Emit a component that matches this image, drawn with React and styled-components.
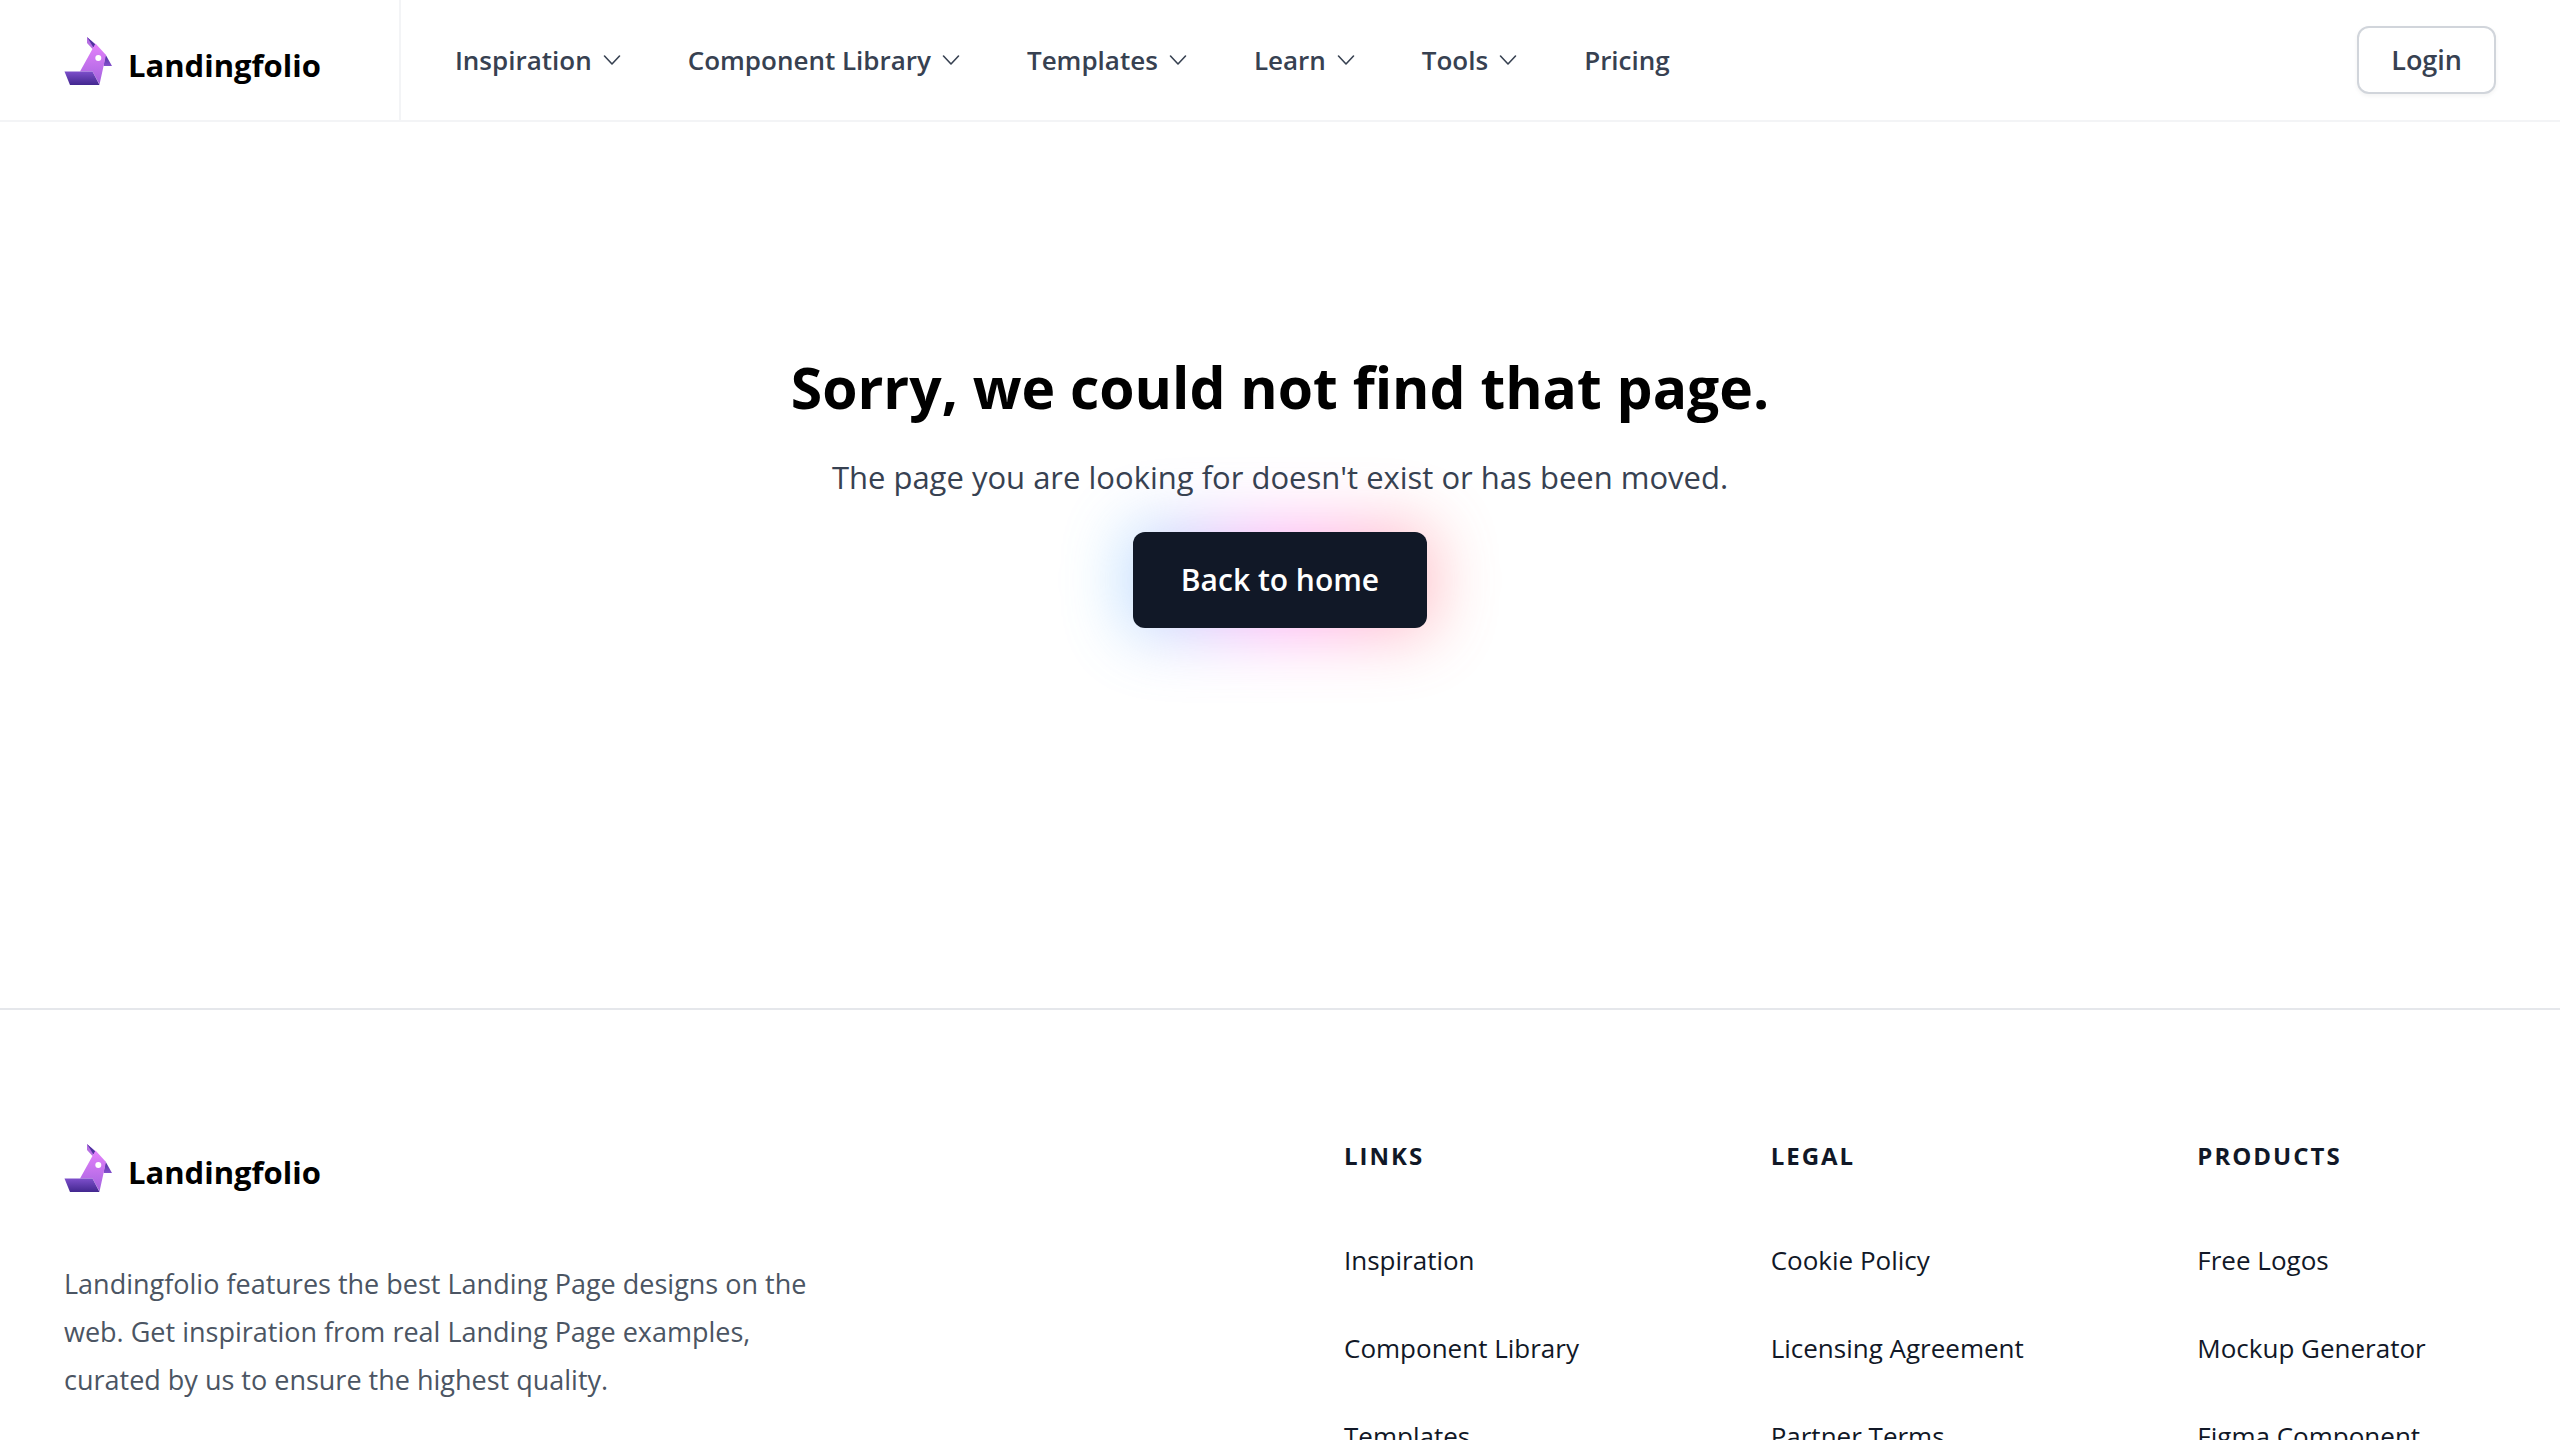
import React, { useId } from "react";
import styled, { createGlobalStyle } from "styled-components";

const GlobalStyle = createGlobalStyle`
  * {
    box-sizing: border-box;
  }

  body {
    margin: 0;
    background: #fff;
    color: #111827;
    font-family: "Open Sans", "Noto Sans", sans-serif;
  }

  a {
    color: inherit;
    text-decoration: none;
  }

  h1, h2, p, ul {
    margin: 0;
    padding: 0;
  }

  ul {
    list-style: none;
  }
`;

const menu = [
  { label: "Inspiration", dropdown: true },
  { label: "Component Library", dropdown: true },
  { label: "Templates", dropdown: true },
  { label: "Learn", dropdown: true },
  { label: "Tools", dropdown: true },
  { label: "Pricing", dropdown: false },
];

const footerColumns = [
  { title: "Links", links: ["Inspiration", "Component Library", "Templates"] },
  { title: "Legal", links: ["Cookie Policy", "Licensing Agreement", "Partner Terms"] },
  { title: "Products", links: ["Free Logos", "Mockup Generator", "Figma Component"] },
];

const LogoMark = () => {
  const id = useId();
  return (
    <svg width="48" height="48" viewBox="0 0 48 48" aria-hidden="true">
      <defs>
        <linearGradient id={`${id}body`} x1="0" y1="0" x2="0" y2="1">
          <stop offset="0" stopColor="#e582fb" />
          <stop offset="1" stopColor="#a262de" />
        </linearGradient>
        <linearGradient id={`${id}dark`} x1="0" y1="0" x2="0" y2="1">
          <stop offset="0" stopColor="#7d4fcb" />
          <stop offset="1" stopColor="#42278f" />
        </linearGradient>
        <linearGradient id={`${id}beak`} x1="0" y1="0" x2="0" y2="1">
          <stop offset="0" stopColor="#4c2f9b" />
          <stop offset="1" stopColor="#8450cd" />
        </linearGradient>
      </defs>
      <path d="M23 0L31.5 7.5L28.5 12L23 6Z" fill="#b66fe2" />
      <path d="M23 0L31.5 7.5L29.5 10.5Z" fill="#4f31a0" />
      <path d="M41.5 17.5L48 29H39.5Z" fill={`url(#${id}beak)`} />
      <path d="M31.5 6.5L42 18L35.5 47.5L28.5 34.5H16Z" fill={`url(#${id}body)`} />
      <path d="M0.5 34.5H28.5L35.5 48H6Z" fill={`url(#${id}dark)`} />
      <circle cx="34.3" cy="21" r="3" fill="#fff" />
    </svg>
  );
};

const Brand = () => (
  <BrandLink href="#">
    <LogoMark />
    <BrandName>Landingfolio</BrandName>
  </BrandLink>
);

const Chevron = () => (
  <svg width="24" height="24" viewBox="0 0 24 24" fill="none" aria-hidden="true">
    <path d="M4.5 8L12 16L19.5 8" stroke="currentColor" strokeWidth="1.6" strokeLinecap="round" strokeLinejoin="round" />
  </svg>
);

const App = () => {
  return (
    <>
      <GlobalStyle />
      <Header>
        <HeaderBrand>
          <Brand />
        </HeaderBrand>
        <Nav>
          {menu.map((item) =>
            item.dropdown ? (
              <NavButton key={item.label} type="button">
                {item.label}
                <Chevron />
              </NavButton>
            ) : (
              <NavLink key={item.label} href="#">
                {item.label}
              </NavLink>
            )
          )}
        </Nav>
        <Login type="button">Login</Login>
      </Header>

      <Hero>
        <Title>Sorry, we could not find that page.</Title>
        <Message>The page you are looking for doesn't exist or has been moved.</Message>
        <HomeLink href="#">Back to home</HomeLink>
      </Hero>

      <Footer>
        <About>
          <Brand />
          <AboutText>
            Landingfolio features the best Landing Page designs on the web. Get
            inspiration from real Landing Page examples, curated by us to ensure
            the highest quality.
          </AboutText>
        </About>
        {footerColumns.map((column) => (
          <div key={column.title}>
            <ColumnTitle>{column.title}</ColumnTitle>
            <LinkList>
              {column.links.map((link) => (
                <li key={link}>
                  <a href="#">{link}</a>
                </li>
              ))}
            </LinkList>
          </div>
        ))}
      </Footer>
    </>
  );
};

const Header = styled.header`
  display: flex;
  align-items: center;
  min-height: 122px;
  padding: 0 64px;
  border-bottom: 2px solid #f3f4f6;
`;

const HeaderBrand = styled.div`
  display: flex;
  align-items: center;
  align-self: stretch;
  padding: 6px 78px 0 0;
  border-right: 2px solid #f3f4f6;
`;

const BrandLink = styled.a`
  display: flex;
  align-items: flex-start;
  gap: 16px;
  color: #000;
`;

const BrandName = styled.span`
  padding-top: 4px;
  font-size: 31px;
  font-weight: 700;
  line-height: 48px;
`;

const Nav = styled.nav`
  display: flex;
  align-items: center;
  gap: 64px;
  margin-left: 54px;
`;

const NavButton = styled.button`
  display: flex;
  align-items: center;
  gap: 8px;
  padding: 0;
  border: 0;
  background: none;
  color: #374151;
  font: 600 26px/40px "Open Sans", "Noto Sans", sans-serif;
  cursor: pointer;
`;

const NavLink = styled.a`
  color: #374151;
  font-size: 26px;
  font-weight: 600;
  line-height: 40px;
`;

const Login = styled.button`
  margin-left: auto;
  padding: 12px 32px;
  border: 2px solid #d1d5db;
  border-radius: 12px;
  background: #fff;
  box-shadow: 0 2px 4px rgba(0, 0, 0, 0.05);
  color: #374151;
  font: 600 27px/40px "Open Sans", "Noto Sans", sans-serif;
  cursor: pointer;
`;

const Hero = styled.main`
  display: flex;
  flex-direction: column;
  align-items: center;
  gap: 27px;
  padding: 230px 64px 380px;
  text-align: center;
`;

const Title = styled.h1`
  color: #000;
  font-size: 57px;
  font-weight: 700;
  line-height: 70px;
`;

const Message = styled.p`
  color: #374151;
  font-size: 31px;
  line-height: 56px;
`;

const HomeLink = styled.a`
  position: relative;
  padding: 24px 48px;
  border-radius: 12px;
  background: #111827;
  color: #fff;
  font-size: 30px;
  font-weight: 600;
  line-height: 48px;

  &::before {
    content: "";
    position: absolute;
    inset: -8px;
    z-index: -1;
    border-radius: 24px;
    background: linear-gradient(90deg, #44bcff, #ff44ec 50%, #ff675e);
    filter: blur(32px);
    opacity: 0.4;
  }
`;

const Footer = styled.footer`
  display: grid;
  grid-template-columns: repeat(6, 1fr);
  column-gap: 128px;
  padding: 128px 64px;
  border-top: 2px solid #e5e7eb;
`;

const About = styled.div`
  grid-column: span 3;
  display: flex;
  flex-direction: column;
  gap: 64px;
  padding-top: 6px;
`;

const AboutText = styled.p`
  max-width: 752px;
  color: #4b5563;
  font-size: 27px;
  line-height: 48px;
`;

const ColumnTitle = styled.h2`
  font-size: 24px;
  font-weight: 700;
  line-height: 36px;
  letter-spacing: 2px;
  text-transform: uppercase;
`;

const LinkList = styled.ul`
  display: flex;
  flex-direction: column;
  gap: 48px;
  margin-top: 66px;
  font-size: 26px;
  line-height: 40px;
`;

export default App;
